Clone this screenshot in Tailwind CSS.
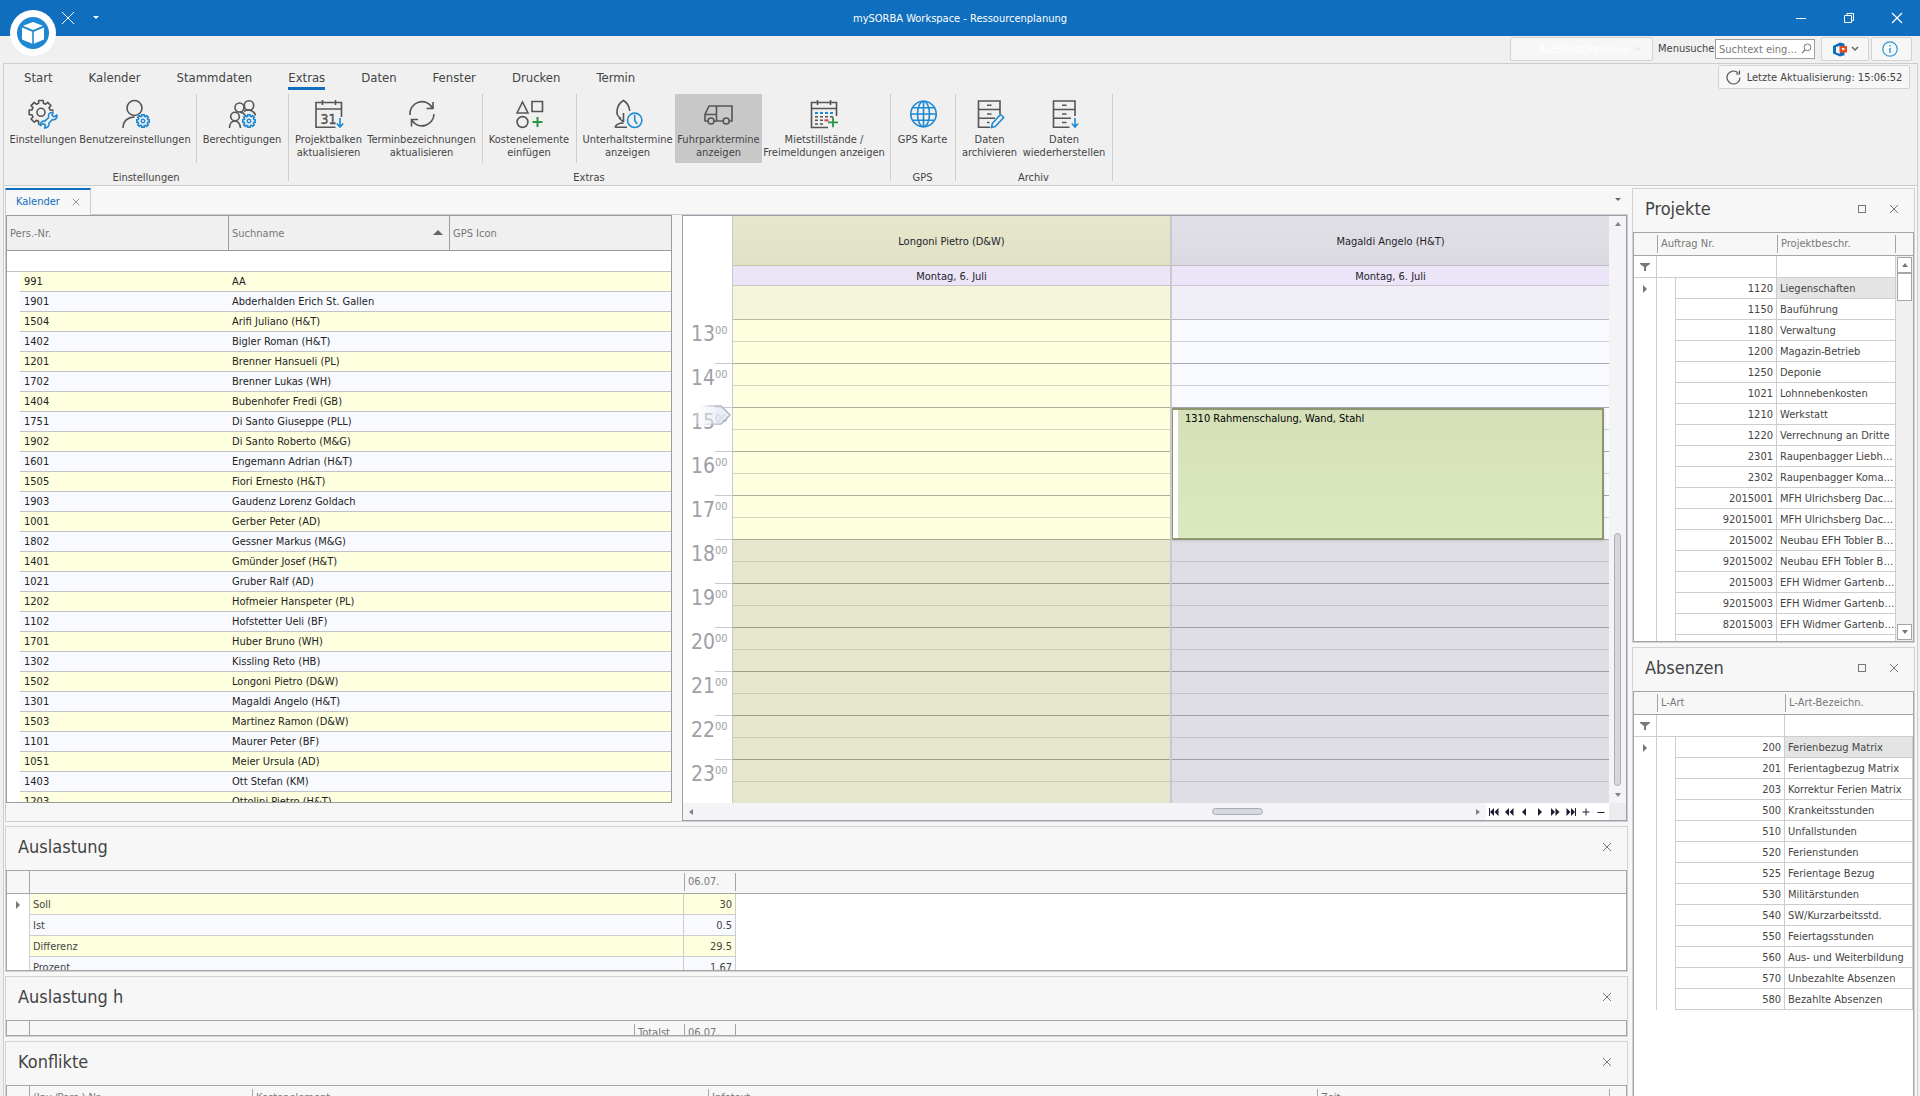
<!DOCTYPE html>
<html lang="de">

<head>
    <meta charset="UTF-8">
    <meta name="viewport" content="width=device-width, initial-scale=1.0">
    <title>mySORBA Workspace - Ressourcenplanung</title>
    <script src="https://cdn.jsdelivr.net/npm/@tailwindcss/browser@4"></script>
</head>

<body class="bg-[#f0f0f0] text-[#444444] text-[11px] leading-[13px] font-['DejaVu_Sans_Condensed','DejaVu_Sans',sans-serif]">
    <svg class="hidden">
        <symbol id="gear" viewBox="-13 -13 26 26">
            <path d="M11.8-2.3V2.3L9 2.4 8.05 4.65 9.95 6.7 6.7 9.95 4.65 8.05 2.4 9 2.3 11.8H-2.3L-2.4 9-4.65 8.05-6.7 9.95-9.95 6.7-8.05 4.65-9 2.4-11.8 2.3V-2.3L-9-2.4-8.05-4.65-9.95-6.7-6.7-9.95-4.65-8.05-2.4-9-2.3-11.8H2.3L2.4-9 4.65-8.05 6.7-9.95 9.95-6.7 8.05-4.65 9-2.4Z" fill="none" stroke="#1e88d2" stroke-width="3" stroke-linejoin="round" />
            <circle r="3.2" fill="none" stroke="#1e88d2" stroke-width="2.6" />
        </symbol>
        <symbol id="close" viewBox="0 0 10 10">
            <path d="M1 1l8 8M9 1l-8 8" fill="none" stroke="currentColor" />
        </symbol>
        <symbol id="filter" viewBox="0 0 10 10">
            <path d="M0 1h10v1L6 5v4H4V5L0 2z" fill="currentColor" />
        </symbol>
    </svg>

    <div class="flex flex-col h-screen overflow-hidden">
        <!-- Titelleiste -->
        <header class="relative h-9 shrink-0 bg-[#106ebe] text-white flex items-center">
            <div class="grow basis-40 flex items-center pl-[62px] gap-[18px]">
                <button aria-label="Werkzeuge"><svg class="w-3 h-3" viewBox="0 0 12 12"><path d="M0 0l12 12M12 0L0 12" stroke="white" /></svg></button>
                <button aria-label="Schnellzugriff"><svg class="w-2 h-1" viewBox="0 0 8 4"><path d="M1 0h6L4 3z" fill="white" /></svg></button>
            </div>
            <h1>mySORBA Workspace - Ressourcenplanung</h1>
            <div class="grow basis-40 flex items-center justify-end pr-[17px] gap-9">
                <button aria-label="Minimieren"><svg class="w-3 h-3" viewBox="0 0 12 12"><path d="M1 6.5h10" stroke="white" /></svg></button>
                <button aria-label="Verkleinern"><svg class="w-3 h-3" viewBox="0 0 12 12"><path d="M1.500 3.500h7v7h-7zM4 3.500v-2h6.500v7h-2" fill="none" stroke="white" /></svg></button>
                <button aria-label="Schliessen"><svg class="w-3 h-3" viewBox="0 0 12 12"><path d="M1 1l10 10M11 1L1 11" stroke="white" stroke-width="1.200" /></svg></button>
            </div>
            <button class="absolute left-[10px] top-[10px] z-10" aria-label="Hauptmenü">
                <svg class="w-[46px] h-[46px]" viewBox="0 0 46 46">
                    <circle cx="23" cy="23" r="23" fill="white" />
                    <circle cx="23" cy="23" r="16" fill="#1e88d2" />
                    <path d="M23 12l10 3.700-10 4.300-10-4.300zM12 17.500l10.200 4.300v12L12 29.500zM34 17.500l-10.200 4.300v12L34 29.500z" fill="white" />
                </svg>
            </button>
        </header>

        <!-- Menusuche -->
        <div class="h-[27px] shrink-0 flex justify-end items-start pt-px pr-2">
            <button class="h-6 w-[143px] mr-[5px] flex items-center justify-end gap-1 pr-2.5 border border-[#d2d2d2] rounded-xs bg-[#f7f7f7] text-white">AaEsTestDomaene
                <svg class="w-2 h-2" viewBox="0 0 8 8"><path d="M1 2l3 3 3-3" fill="none" stroke="#eaeaea" stroke-width="1.500" /></svg></button>
            <label for="suche" class="w-[57px] h-6 leading-[23px]">Menusuche</label>
            <div class="relative mt-0.5 mr-1.5">
                <input id="suche" type="text" placeholder="Suchtext eing…" class="block w-[100px] h-5 pl-[3px] pr-4 border border-[#a0a0a0] bg-white placeholder:text-[#777777]">
                <svg class="absolute right-[3px] top-1 w-[11px] h-[11px]" viewBox="0 0 11 11"><circle cx="6.500" cy="4.300" r="3.400" fill="none" stroke="#777" /><path d="M4 7L1 10" stroke="#777" stroke-width="1.300" /></svg>
            </div>
            <button class="h-6 w-12 mr-0.5 flex items-center justify-center gap-1 border border-[#d2d2d2] rounded-xs bg-[#f7f7f7]" aria-label="Office">
                <svg class="w-[15px] h-[15px]" viewBox="0 0 15 15"><path d="M1 4L8 .5l4.500 1.200v11.600L8 14.500 1 11.500z" fill="#106ebe" /><path d="M4 5l4-1.200v8L4 10.500z" fill="#f7f7f7" /><path d="M7.500 4H15v6.500H7.500z" fill="#e64a19" /><path d="M9.500 6h3v2h-1.500v1z" fill="white" /></svg>
                <svg class="w-2 h-2" viewBox="0 0 8 8"><path d="M1 2l3 3 3-3" fill="none" stroke="#666" stroke-width="1.500" /></svg>
            </button>
            <button class="h-6 w-[41px] pr-1 flex items-center justify-center border border-[#d2d2d2] rounded-xs bg-[#f7f7f7]" aria-label="Info">
                <svg class="w-4 h-4" viewBox="0 0 16 16"><circle cx="8" cy="8" r="7.200" fill="none" stroke="#2e95d3" stroke-width="1.200" /><path d="M8 7v5M8 4v1.500" stroke="#2e95d3" stroke-width="1.400" /></svg>
            </button>
        </div>

        <div class="flex-1 min-h-0 ml-[3px] mr-0.5 flex flex-col border border-b-0 border-[#cdcdcd] bg-[#f7f7f7]">
            <!-- Ribbon -->
            <div class="relative shrink-0 bg-[#f0f0f0] border-b border-[#cdcdcd] pb-1">
                <nav class="h-[26px] pl-5 flex gap-9 text-[13px] leading-7">
                    <button class="h-[26px] whitespace-nowrap border-b-3 border-transparent">Start</button>
                    <button class="h-[26px] whitespace-nowrap border-b-3 border-transparent">Kalender</button>
                    <button class="h-[26px] whitespace-nowrap border-b-3 border-transparent">Stammdaten</button>
                    <button class="h-[26px] whitespace-nowrap border-b-3 border-[#106ebe]">Extras</button>
                    <button class="h-[26px] whitespace-nowrap border-b-3 border-transparent">Daten</button>
                    <button class="h-[26px] whitespace-nowrap border-b-3 border-transparent">Fenster</button>
                    <button class="h-[26px] whitespace-nowrap border-b-3 border-transparent">Drucken</button>
                    <button class="h-[26px] whitespace-nowrap border-b-3 border-transparent">Termin</button>
                </nav>
                <button class="absolute right-[7px] top-px h-6 w-48 flex items-center justify-center gap-1.5 border border-[#d2d2d2] rounded-xs bg-[#f7f7f7] whitespace-nowrap">
                    <svg class="w-[15px] h-[15px]" viewBox="0 0 15 15"><path d="M14 7.500A6.500 6.500 0 1 1 12 2.800M13.500 .5v3.500H10" fill="none" stroke="#555" stroke-width="1.200" /></svg>
                    Letzte Aktualisierung: 15:06:52
                </button>

                <div class="mt-1 flex h-[87px] text-center">
                    <div class="flex flex-col pl-1 pr-1 border-r border-[#cdcdcd]">
                        <div class="flex shrink-0">
                            <button class="w-[70px] h-[69px] pt-1 flex flex-col items-center whitespace-nowrap">
                                <svg class="w-8 h-8 mb-[3px] shrink-0" viewBox="0 0 32 32" fill="none" stroke="#555" stroke-width="1.600" stroke-linejoin="round">
                                    <path transform="translate(14 14.300)" d="M-1.500 11.800H-2.300L-2.400 9-4.650 8.050-6.700 9.950-9.950 6.700-8.050 4.650-9 2.400-11.800 2.300V-2.300L-9-2.400-8.050-4.650-9.950-6.700-6.700-9.950-4.650-8.050-2.400-9-2.300-11.800H2.300L2.400-9 4.650-8.050 6.700-9.950 9.950-6.700 8.050-4.650 9-2.400 11.800-2.300V-1" />
                                    <circle cx="14" cy="14.300" r="4" />
                                    <path stroke="#1e88d2" d="M26 14.200C22.500 14 20.600 17 21.600 19.600L17.800 23.200C15.400 22.600 13 24.400 13.200 27.600L16 25.600 18.600 27 17.600 30C20.800 30.200 22.600 27.600 21.800 25.200L25.400 21.600C28.400 22.200 30.600 20 30 17L27.400 18.800 25 17.400Z" />
                                </svg>
                                Einstellungen
                            </button>
                            <button class="w-[114px] h-[69px] pt-1 flex flex-col items-center whitespace-nowrap">
                                <svg class="w-8 h-8 mb-[3px] shrink-0" viewBox="0 0 32 32" fill="none" stroke="#555" stroke-width="1.600">
                                    <circle cx="15.500" cy="10" r="7.500" /><path d="M4 30c0-7 5-11 11.500-11" />
                                    <use href="#gear" x="17" y="16" width="14" height="14" />
                                </svg>
                                Benutzereinstellungen
                            </button>
                            <div class="w-px h-[69px] ml-1 mr-[3px] bg-[#cdcdcd]"></div>
                            <button class="w-[84px] h-[69px] pt-1 flex flex-col items-center whitespace-nowrap">
                                <svg class="w-8 h-8 mb-[3px] shrink-0" viewBox="0 0 32 32" fill="none" stroke="#555" stroke-width="1.600">
                                    <circle cx="13.500" cy="9.500" r="4.500" /><circle cx="23" cy="7.500" r="4.700" /><circle cx="9" cy="18.500" r="4.300" />
                                    <path d="M3.500 30c0-4 2-7 5.500-7s5 3 5.500 7M14 14.200c2.500 0 4 1.200 5 3M18 13.500c2-1.500 5-1.800 7.500-.8 2 .9 3.500 2.500 4 4.800" />
                                    <use href="#gear" x="16" y="16" width="14" height="14" />
                                </svg>
                                Berechtigungen
                            </button>
                        </div>
                        <div class="pt-2">Einstellungen</div>
                    </div>

                    <div class="flex flex-col pl-[3px] pr-1 border-r border-[#cdcdcd]">
                        <div class="flex shrink-0">
                            <button class="w-[73px] h-[69px] pt-1 flex flex-col items-center whitespace-nowrap">
                                <svg class="w-8 h-8 mb-[3px] shrink-0" viewBox="0 0 32 32" fill="none" stroke="#555" stroke-width="1.600">
                                    <path d="M22.500 29.300H3V4.500h25.500V19M3 11h25.500M9.500 2v5M22.500 2v5" />
                                    <text x="7.500" y="26" font-size="14" fill="#555" stroke="#555" stroke-width=".4">31</text>
                                    <path stroke="#1e88d2" d="M27 20v9M23.800 25.500L27 29l3.200-3.500" />
                                </svg>
                                Projektbalken<br>aktualisieren
                            </button>
                            <button class="w-[113px] h-[69px] pt-1 flex flex-col items-center whitespace-nowrap">
                                <svg class="w-8 h-8 mb-[3px] shrink-0" viewBox="0 0 32 32" fill="none" stroke="#555" stroke-width="1.600">
                                    <path d="M4 17A12 12 0 0 1 26.500 10M27 4v6.500h-6.500M28 16A12 12 0 0 1 6 22.500M5.500 28.500v-7H12" />
                                </svg>
                                Terminbezeichnungen<br>aktualisieren
                            </button>
                            <div class="w-px h-[69px] ml-1 mr-[3px] bg-[#cdcdcd]"></div>
                            <button class="w-[86px] h-[69px] pt-1 flex flex-col items-center whitespace-nowrap">
                                <svg class="w-8 h-8 mb-[3px] shrink-0" viewBox="0 0 32 32" fill="none" stroke="#555" stroke-width="1.600">
                                    <path d="M9.500 4L15 15H4zM19 3.500h10.500v10H19z" /><circle cx="9.500" cy="24" r="5.400" />
                                    <path stroke="#2a9445" stroke-width="2" d="M24.500 19v10M19.500 24h10" />
                                </svg>
                                Kostenelemente<br>einfügen
                            </button>
                            <div class="w-px h-[69px] ml-1 mr-[3px] bg-[#cdcdcd]"></div>
                            <button class="w-[95px] h-[69px] pt-1 flex flex-col items-center whitespace-nowrap">
                                <svg class="w-8 h-8 mb-[3px] shrink-0" viewBox="0 0 32 32" fill="none" stroke="#555" stroke-width="1.600">
                                    <path d="M9 20.500C2 17 5 6 11.500 2.500c4 2.500 6 6.500 6.200 10.500M11.500 15v9M7 20l4.500 4M3 29.500c1-3 3-4.500 8.500-4.500M3 29.200h12" />
                                    <circle cx="22.700" cy="22.300" r="7.200" stroke="#1e88d2" /><path stroke="#1e88d2" d="M22.700 17v5.500l2.500 3.500" />
                                </svg>
                                Unterhaltstermine<br>anzeigen
                            </button>
                            <button class="w-[87px] h-[69px] pt-1 flex flex-col items-center whitespace-nowrap bg-[#c8c8c8]">
                                <svg class="w-8 h-8 mb-[3px] shrink-0" viewBox="0 0 32 32" fill="none" stroke="#555" stroke-width="1.600">
                                    <path d="M4.800 23H2v-6.500L6 8h23v15h-2.500M11 23h9M13.500 8v15M2 16.500h11.500" /><circle cx="8" cy="23" r="3" /><circle cx="23.200" cy="23" r="3" />
                                </svg>
                                Fuhrparktermine<br>anzeigen
                            </button>
                            <button class="w-[124px] h-[69px] pt-1 flex flex-col items-center whitespace-nowrap">
                                <svg class="w-8 h-8 mb-[3px] shrink-0" viewBox="0 0 32 32" fill="none" stroke="#555" stroke-width="1.600">
                                    <path d="M20 29.500H3.500V4.500h25V18M3.500 10.500h25M9.500 2v5M22.500 2v5" />
                                    <path stroke="#1e88d2" stroke-width="2" stroke-dasharray="3 2" d="M7 15h19" />
                                    <path stroke-width="1.500" stroke-dasharray="3 2" d="M7 18.700h19M7 22.300h10M7 26h10" />
                                    <path stroke="#e53935" stroke-width="2" d="M16.500 22.300h4" />
                                    <path stroke="#2a9445" stroke-width="1.800" d="M25 19.300v10M20 24.300h10" />
                                </svg>
                                Mietstillstände /<br>Freimeldungen anzeigen
                            </button>
                        </div>
                        <div class="pt-2">Extras</div>
                    </div>

                    <div class="flex flex-col pl-[3px] pr-1 border-r border-[#cdcdcd]">
                        <div class="flex shrink-0">
                            <button class="w-[57px] h-[69px] pt-1 flex flex-col items-center whitespace-nowrap">
                                <svg class="w-8 h-8 mb-[3px] shrink-0" viewBox="0 0 32 32" fill="none" stroke="#1e88d2" stroke-width="1.600">
                                    <circle cx="16.500" cy="16" r="12.700" /><ellipse cx="16.500" cy="16" rx="6" ry="12.700" />
                                    <path d="M16.500 3.500v25M4 16h25M6 9.700h21M6 22.300h21" />
                                </svg>
                                GPS Karte
                            </button>
                        </div>
                        <div class="pt-2">GPS</div>
                    </div>

                    <div class="flex flex-col pl-[3px] pr-1 border-r border-[#cdcdcd]">
                        <div class="flex shrink-0">
                            <button class="w-[61px] h-[69px] pt-1 flex flex-col items-center whitespace-nowrap">
                                <svg class="w-8 h-8 mb-[3px] shrink-0" viewBox="0 0 32 32" fill="none" stroke="#555" stroke-width="1.600">
                                    <path d="M16 29.300H4.500V3H26v13M4.500 11.500H26M4.500 20.300H21M13 7.300h4.500M13 16h4.500M13 24.500h2.500" />
                                    <path stroke="#1e88d2" d="M26.500 16.500l3.200 3-8.500 9-3.700 1 .8-4z" />
                                </svg>
                                Daten<br>archivieren
                            </button>
                            <button class="w-[88px] h-[69px] pt-1 flex flex-col items-center whitespace-nowrap">
                                <svg class="w-8 h-8 mb-[3px] shrink-0" viewBox="0 0 32 32" fill="none" stroke="#555" stroke-width="1.600">
                                    <path d="M21.500 29.300H5.500V3H27v15M5.500 11.500H27M5.500 20.300H23M14 7.300h4.500M14 16h4.500M14 24.500h4.500" />
                                    <path stroke="#1e88d2" d="M27 20v9M23.800 25.500L27 29l3.200-3.500" />
                                </svg>
                                Daten<br>wiederherstellen
                            </button>
                        </div>
                        <div class="pt-2">Archiv</div>
                    </div>
                </div>
            </div>

            <div class="flex-1 min-h-0 flex gap-1 pl-px pr-0.5">
                <div class="flex-1 min-w-0 flex flex-col">
                    <!-- Kalender -->
                    <div class="h-7 shrink-0 flex items-end justify-between pr-1.5">
                        <button class="relative z-10 h-[27px] -mb-px w-[86px] pl-2.5 pr-2.5 pb-0.5 flex items-center justify-between border-x border-[#cdcdcd] border-t-2 border-t-[#106ebe] bg-[#f7f7f7] text-[#106ebe]">Kalender
                            <svg class="w-2 h-2 text-[#777777]"><use href="#close" /></svg></button>
                        <button class="h-7" aria-label="Fensterliste"><svg class="w-2 h-1" viewBox="0 0 8 4"><path d="M1 0h6L4 3z" fill="#666" /></svg></button>
                    </div>
                    <section class="flex-1 min-h-0 flex gap-2.5 border border-[#cdcdcd]">
                        <div class="w-[666px] mb-[18px] shrink-0 overflow-hidden border border-[#9c9c9c] bg-white">
                            <table class="w-full table-fixed border-separate border-spacing-0 text-left text-[#222222]">
                                <colgroup>
                                    <col class="w-[13px]">
                                    <col class="w-[209px]">
                                    <col class="w-[221px]">
                                    <col>
                                </colgroup>
                                <thead class="bg-[#f0f0f0] text-[#777777]">
                                    <tr>
                                        <th colspan="2" class="h-[35px] p-0 pl-[3px] border-b border-r border-[#9c9c9c] font-normal">Pers.-Nr.</th>
                                        <th class="p-0 px-[3px] border-b border-r border-[#9c9c9c] font-normal">
                                            <div class="flex items-center justify-between pr-[3px]">Suchname<svg class="w-2.5 h-2.5" viewBox="0 0 10 10"><path d="M5 2l5 5H0z" fill="#666" /></svg></div>
                                        </th>
                                        <th class="p-0 pl-[3px] border-b border-[#9c9c9c] font-normal">GPS Icon</th>
                                    </tr>
                                    <tr class="bg-white"><td colspan="4" class="h-[21px] p-0 border-b border-[#c3c3c3]"></td></tr>
                                </thead>
                                <tbody id="personen"></tbody>
                            </table>
                        </div>

                        <div class="flex-1 min-w-0 flex flex-col border border-[#9d9dab] bg-[#f4f4f6] text-[#1e1e2d]">
                            <div class="flex-1 min-h-0 flex">
                                <div class="w-[50px] shrink-0 overflow-hidden border-r border-[#c8c8d0] bg-white text-[#a0a0a8]">
                                    <div class="h-[104px]"></div>
                                    <div id="stunden" class="relative">
                                        <svg class="absolute left-2 top-[84px] w-10 h-[22px]" viewBox="0 0 40 22">
                                            <defs><linearGradient id="jetzt"><stop offset="0" stop-color="#fff" stop-opacity=".2" /><stop offset=".7" stop-color="#e2e6f5" stop-opacity=".7" /><stop offset="1" stop-color="#eef0fa" stop-opacity=".8" /></linearGradient>
                                            <linearGradient id="rand"><stop offset=".2" stop-color="#c8c8d0" stop-opacity="0" /><stop offset=".7" stop-color="#b0b4c8" /></linearGradient></defs>
                                            <path d="M0 2h30l9 9-9 9H0z" fill="url(#jetzt)" /><path d="M0 1.500L30 2l9 9-9 9-30 .5" fill="none" stroke="url(#rand)" stroke-width="1.500" />
                                        </svg>
                                    </div>
                                </div>
                                <div class="flex-1 min-w-0 overflow-hidden border-r-2 border-[#c8c8d0] text-center">
                                    <div class="h-[50px] leading-[52px] border-b border-[#c1c2aa] bg-linear-to-b from-[#e6e7cb] to-[#e0e1c5]">Longoni Pietro (D&amp;W)</div>
                                    <div class="h-5 leading-[21px] border-b border-[#c8c4d4] bg-[#ece4f7]">Montag, 6. Juli</div>
                                    <div class="h-[34px] border-b border-[#b9b9a0] bg-[#f5f6d9]"></div>
                                    <div id="spalte1"></div>
                                </div>
                                <div class="flex-1 min-w-0 overflow-hidden text-center">
                                    <div class="h-[50px] leading-[52px] border-b border-[#bcbbc4] bg-linear-to-b from-[#e1e0e6] to-[#dbdae0]">Magaldi Angelo (H&amp;T)</div>
                                    <div class="h-5 leading-[21px] border-b border-[#c8c4d4] bg-[#ece4f7]">Montag, 6. Juli</div>
                                    <div class="h-[34px] border-b border-[#b9b9c1] bg-[#f0eff5]"></div>
                                    <div id="spalte2" class="relative">
                                        <div class="absolute left-0 right-[5px] top-[88px] h-[132px] flex border-2 border-l border-[#8c9671] bg-linear-to-b from-[#d5e0b8] to-[#dce9c0] shadow-sm text-left">
                                            <div class="w-[5px] bg-white"></div>
                                            <div class="pl-[7px] pt-0.5 text-black">1310 Rahmenschalung, Wand, Stahl</div>
                                        </div>
                                    </div>
                                </div>
                                <div class="w-[17px] flex flex-col items-center py-1.5">
                                    <svg class="w-2 h-1" viewBox="0 0 8 4"><path d="M1 4h6L4 0z" fill="#808090" /></svg>
                                    <div class="flex-1"></div>
                                    <div class="w-[7px] h-[253px] mb-[7px] rounded-full border border-[#a9adb8] bg-[#d6d8dd]"></div>
                                    <svg class="w-2 h-1" viewBox="0 0 8 4"><path d="M1 0h6L4 4z" fill="#808090" /></svg>
                                </div>
                            </div>
                            <div class="h-[17px] shrink-0 flex items-center text-[#1e1e32]">
                                <svg class="w-1 h-2 ml-1.5" viewBox="0 0 4 8"><path d="M4 1v6L0 4z" fill="#808090" /></svg>
                                <div class="flex-1"></div>
                                <div class="w-[51px] h-[7px] mr-[213px] rounded-full border border-[#a9adb8] bg-[#d6d8dd]"></div>
                                <svg class="w-1 h-2 mr-1.5" viewBox="0 0 4 8"><path d="M0 1v6l4-3z" fill="#808090" /></svg>
                                <div class="h-full w-[123px] flex items-center justify-around bg-white">
                                    <button aria-label="Anfang"><svg class="w-2.5 h-2" viewBox="0 0 10 8"><path d="M0 0h1v8H0zM5 0v8L1 4zM9.500 0v8l-4-4z" fill="currentColor" /></svg></button>
                                    <button aria-label="Seite zurück"><svg class="w-2.5 h-2" viewBox="0 0 10 8"><path d="M5 0v8L1 4zM9.500 0v8l-4-4z" fill="currentColor" /></svg></button>
                                    <button aria-label="Zurück"><svg class="w-2.5 h-2" viewBox="0 0 10 8"><path d="M7 0v8L3 4z" fill="currentColor" /></svg></button>
                                    <button aria-label="Vor"><svg class="w-2.5 h-2" viewBox="0 0 10 8"><path d="M3 0v8l4-4z" fill="currentColor" /></svg></button>
                                    <button aria-label="Seite vor"><svg class="w-2.5 h-2" viewBox="0 0 10 8"><path d="M1 0v8l4-4zM5.500 0v8l4-4z" fill="currentColor" /></svg></button>
                                    <button aria-label="Ende"><svg class="w-2.5 h-2" viewBox="0 0 10 8"><path d="M.5 0v8l4-4zM5 0v8l4-4zM9 0h1v8H9z" fill="currentColor" /></svg></button>
                                    <button aria-label="Mehr"><svg class="w-2.5 h-2" viewBox="0 0 10 8"><path d="M1.500 4h7M5 .5v7" stroke="currentColor" /></svg></button>
                                    <button aria-label="Weniger"><svg class="w-2.5 h-2" viewBox="0 0 10 8"><path d="M1.500 4.500h7" stroke="currentColor" /></svg></button>
                                </div>
                                <div class="w-[17px] h-full bg-[#ececef]"></div>
                            </div>
                        </div>
                    </section>

                    <!-- Auslastung -->
                    <section class="h-[146px] mt-1 shrink-0 flex flex-col border border-[#d2d2d2]">
                        <div class="h-[43px] shrink-0 pl-3 pr-[15px] pb-1 flex items-center justify-between">
                            <h2 class="text-[18px] leading-6">Auslastung</h2>
                            <button aria-label="Schliessen"><svg class="w-2.5 h-2.5 text-[#777777]"><use href="#close" /></svg></button>
                        </div>
                        <div class="flex-1 min-h-0 overflow-hidden border border-[#a5a5a5] bg-white">
                            <div class="h-[23px] border-b border-[#a5a5a5] bg-[#f7f7f7]"></div>
                            <table class="-mt-[23px] relative table-fixed border-separate border-spacing-0 w-[729px]">
                                <thead class="text-[#777777]">
                                    <tr>
                                        <th class="w-[23px] h-[23px] p-0 border-b border-r border-[#a5a5a5]"></th>
                                        <th class="w-[654px] p-0 border-b border-[#a5a5a5]"></th>
                                        <th class="w-[52px] p-0 border-b border-[#a5a5a5] font-normal text-left"><div class="h-[18px] pl-[3px] leading-[18px] border-x border-[#a5a5a5]">06.07.</div></th>
                                    </tr>
                                </thead>
                                <tbody id="auslastung"></tbody>
                            </table>
                        </div>
                    </section>

                    <!-- Auslastung h -->
                    <section class="h-[61px] mt-1 shrink-0 flex flex-col border border-[#d2d2d2]">
                        <div class="h-[43px] shrink-0 pl-3 pr-[15px] pb-1 flex items-center justify-between">
                            <h2 class="text-[18px] leading-6">Auslastung h</h2>
                            <button aria-label="Schliessen"><svg class="w-2.5 h-2.5 text-[#777777]"><use href="#close" /></svg></button>
                        </div>
                        <div class="flex-1 min-h-0 overflow-hidden flex border border-[#a5a5a5] text-[#777777]">
                            <div class="w-[23px] border-r border-[#a5a5a5]"></div>
                            <div class="w-[604px]"></div>
                            <div class="w-[50px] h-[18px] mt-[3px] pl-[3px] leading-[18px] border-l border-[#a5a5a5]">Totalst</div>
                            <div class="w-[52px] h-[18px] mt-[3px] pl-[3px] leading-[18px] border-x border-[#a5a5a5]">06.07.</div>
                        </div>
                    </section>

                    <!-- Konflikte -->
                    <section class="h-[55px] mt-1 shrink-0 flex flex-col border border-b-0 border-[#d2d2d2]">
                        <div class="h-[43px] shrink-0 pl-3 pr-[15px] pb-1 flex items-center justify-between">
                            <h2 class="text-[18px] leading-6">Konflikte</h2>
                            <button aria-label="Schliessen"><svg class="w-2.5 h-2.5 text-[#777777]"><use href="#close" /></svg></button>
                        </div>
                        <div class="flex-1 min-h-0 overflow-hidden flex border border-b-0 border-[#a5a5a5] text-[#777777]">
                            <div class="w-[23px] border-r border-[#a5a5a5]"></div>
                            <div class="w-[222px] h-[18px] mt-[3px] pl-[3px] leading-[18px]">(Inv./Pers.) Nr.</div>
                            <div class="w-[456px] h-[18px] mt-[3px] pl-[3px] leading-[18px] border-l border-[#a5a5a5]">Kostenelement</div>
                            <div class="flex-1 h-[18px] mt-[3px] pl-[3px] leading-[18px] border-l border-[#a5a5a5]">Infotext</div>
                            <div class="w-[293px] h-[18px] mt-[3px] pl-[3px] pr-1.5 flex justify-between leading-[18px] border-x border-[#a5a5a5]">Zeit<svg class="w-2.5 h-2.5 mt-1.5" viewBox="0 0 10 10"><path d="M0 1h10L5 6z" fill="#666" /></svg></div>
                            <div class="w-4"></div>
                        </div>
                    </section>
                </div>

                <aside class="w-[283px] shrink-0 flex flex-col pt-0.5">
                    <!-- Projekte -->
                    <section class="h-[455px] shrink-0 flex flex-col border border-[#d2d2d2]">
                        <div class="h-[43px] shrink-0 pl-3 pr-[15px] pb-1 flex items-center">
                            <h2 class="flex-1 text-[18px] leading-6">Projekte</h2>
                            <button class="mr-[23px]" aria-label="Maximieren"><span class="block w-2 h-2 border border-[#777777]"></span></button>
                            <button aria-label="Schliessen"><svg class="w-2.5 h-2.5 text-[#777777]"><use href="#close" /></svg></button>
                        </div>
                        <div class="flex-1 min-h-0 flex overflow-hidden border border-[#a5a5a5] bg-white">
                            <table class="w-[262px] h-px shrink-0 table-fixed border-separate border-spacing-0">
                                <colgroup>
                                    <col class="w-[23px]">
                                    <col class="w-[19px]">
                                    <col class="w-[101px]">
                                    <col>
                                </colgroup>
                                <thead class="bg-[#f7f7f7] text-[#777777] text-left">
                                    <tr>
                                        <th class="h-[23px] p-0 border-b border-[#a5a5a5]"></th>
                                        <th colspan="2" class="p-0 border-b border-[#a5a5a5] font-normal"><div class="h-[18px] pl-[3px] leading-[18px] border-l border-[#a5a5a5]">Auftrag Nr.</div></th>
                                        <th class="p-0 border-b border-[#a5a5a5] font-normal"><div class="h-[18px] pl-[3px] leading-[18px] border-x border-[#a5a5a5]">Projektbeschr.</div></th>
                                    </tr>
                                    <tr class="bg-white text-[#777777]">
                                        <td class="h-[22px] p-0 border-b border-r border-[#cdcdcd]"><svg class="w-2.5 h-2.5 ml-1.5"><use href="#filter" /></svg></td>
                                        <td colspan="2" class="p-0 border-b border-r border-[#cdcdcd]"></td>
                                        <td class="p-0 border-b border-r border-[#cdcdcd]"></td>
                                    </tr>
                                </thead>
                                <tbody id="projekte"></tbody>
                            </table>
                            <div class="flex-1 flex flex-col">
                                <div class="h-[23px] shrink-0 bg-[#f7f7f7] border-b border-[#a5a5a5]"></div>
                                <div class="flex-1 flex flex-col p-px bg-[#f0f0f0]">
                                    <button class="h-4 flex items-center justify-center border border-[#a5a5a5] bg-white" aria-label="Nach oben"><svg class="w-2 h-1" viewBox="0 0 8 4"><path d="M1 4h6L4 0z" fill="#777" /></svg></button>
                                    <div class="h-7 border border-[#a5a5a5] bg-white"></div>
                                    <div class="flex-1"></div>
                                    <button class="h-4 flex items-center justify-center border border-[#a5a5a5] bg-white" aria-label="Nach unten"><svg class="w-2 h-1" viewBox="0 0 8 4"><path d="M1 0h6L4 4z" fill="#777" /></svg></button>
                                </div>
                            </div>
                        </div>
                    </section>

                    <!-- Absenzen -->
                    <section class="flex-1 min-h-0 mt-1 flex flex-col border border-b-0 border-[#d2d2d2]">
                        <div class="h-[43px] shrink-0 pl-3 pr-[15px] pb-1 flex items-center">
                            <h2 class="flex-1 text-[18px] leading-6">Absenzen</h2>
                            <button class="mr-[23px]" aria-label="Maximieren"><span class="block w-2 h-2 border border-[#777777]"></span></button>
                            <button aria-label="Schliessen"><svg class="w-2.5 h-2.5 text-[#777777]"><use href="#close" /></svg></button>
                        </div>
                        <div class="flex-1 min-h-0 overflow-hidden border border-b-0 border-[#a5a5a5] bg-white">
                            <table class="w-full table-fixed border-separate border-spacing-0">
                                <colgroup>
                                    <col class="w-[23px]">
                                    <col class="w-[19px]">
                                    <col class="w-[109px]">
                                    <col>
                                </colgroup>
                                <thead class="bg-[#f7f7f7] text-[#777777] text-left">
                                    <tr>
                                        <th class="h-[23px] p-0 border-b border-[#a5a5a5]"></th>
                                        <th colspan="2" class="p-0 border-b border-[#a5a5a5] font-normal"><div class="h-[18px] pl-[3px] leading-[18px] border-l border-[#a5a5a5]">L-Art</div></th>
                                        <th class="p-0 border-b border-[#a5a5a5] font-normal"><div class="h-[18px] pl-[3px] leading-[18px] border-l border-[#a5a5a5]">L-Art-Bezeichn.</div></th>
                                    </tr>
                                    <tr class="bg-white text-[#777777]">
                                        <td class="h-[22px] p-0 border-b border-r border-[#cdcdcd]"><svg class="w-2.5 h-2.5 ml-1.5"><use href="#filter" /></svg></td>
                                        <td colspan="2" class="p-0 border-b border-r border-[#cdcdcd]"></td>
                                        <td class="p-0 border-b border-[#cdcdcd]"></td>
                                    </tr>
                                </thead>
                                <tbody id="absenzen"></tbody>
                            </table>
                        </div>
                    </section>
                </aside>
            </div>
        </div>
    </div>

    <script>
        const personen = [
            [991, "AA"], [1901, "Abderhalden Erich St. Gallen"], [1504, "Arifi Juliano (H&amp;T)"], [1402, "Bigler Roman (H&amp;T)"],
            [1201, "Brenner Hansueli (PL)"], [1702, "Brenner Lukas (WH)"], [1404, "Bubenhofer Fredi (GB)"], [1751, "Di Santo Giuseppe (PLL)"],
            [1902, "Di Santo Roberto (M&amp;G)"], [1601, "Engemann Adrian (H&amp;T)"], [1505, "Fiori Ernesto (H&amp;T)"], [1903, "Gaudenz Lorenz Goldach"],
            [1001, "Gerber Peter (AD)"], [1802, "Gessner Markus (M&amp;G)"], [1401, "Gmünder Josef (H&amp;T)"], [1021, "Gruber Ralf (AD)"],
            [1202, "Hofmeier Hanspeter (PL)"], [1102, "Hofstetter Ueli (BF)"], [1701, "Huber Bruno (WH)"], [1302, "Kissling Reto (HB)"],
            [1502, "Longoni Pietro (D&amp;W)"], [1301, "Magaldi Angelo (H&amp;T)"], [1503, "Martinez Ramon (D&amp;W)"], [1101, "Maurer Peter (BF)"],
            [1051, "Meier Ursula (AD)"], [1403, "Ott Stefan (KM)"], [1203, "Ottolini Pietro (H&amp;T)"]
        ];
        const projekte = [
            [1120, "Liegenschaften"], [1150, "Bauführung"], [1180, "Verwaltung"], [1200, "Magazin-Betrieb"], [1250, "Deponie"],
            [1021, "Lohnnebenkosten"], [1210, "Werkstatt"], [1220, "Verrechnung an Dritte"], [2301, "Raupenbagger Liebh…"], [2302, "Raupenbagger Koma…"],
            [2015001, "MFH Ulrichsberg Dac…"], [92015001, "MFH Ulrichsberg Dac…"], [2015002, "Neubau EFH Tobler B…"], [92015002, "Neubau EFH Tobler B…"],
            [2015003, "EFH Widmer Gartenb…"], [92015003, "EFH Widmer Gartenb…"], [82015003, "EFH Widmer Gartenb…"], ["", ""]
        ];
        const absenzen = [
            [200, "Ferienbezug Matrix"], [201, "Ferientagbezug Matrix"], [203, "Korrektur Ferien Matrix"], [500, "Krankeitsstunden"],
            [510, "Unfallstunden"], [520, "Ferienstunden"], [525, "Ferientage Bezug"], [530, "Militärstunden"], [540, "SW/Kurzarbeitsstd."],
            [550, "Feiertagsstunden"], [560, "Aus- und Weiterbildung"], [570, "Unbezahlte Absenzen"], [580, "Bezahlte Absenzen"]
        ];
        const auslastung = [["Soll", "30"], ["Ist", "0.5"], ["Differenz", "29.5"], ["Prozent", "1.67"]];
        const pfeil = '<svg class="w-1 h-2 ml-[9px]" viewBox="0 0 4 8"><path d="M0 0v8l4-4z" fill="#777" /></svg>';

        document.getElementById("personen").innerHTML = personen.map(([nr, name], i) => `
            <tr class="${i % 2 ? "bg-[#f8faff]" : "bg-[#feffdf]"}">
                <td class="h-5 p-0 bg-white"></td>
                <td class="p-0 pl-1 border-b border-[#c3c3c3]">${nr}</td>
                <td class="p-0 pl-[3px] border-b border-[#c3c3c3]">${name}</td>
                <td class="p-0 border-b border-[#c3c3c3]"></td>
            </tr>`).join("");

        document.getElementById("auslastung").innerHTML = auslastung.map(([titel, wert], i) => `
            <tr class="${i % 2 ? "bg-[#f8faff]" : "bg-[#feffdf]"}">
                <td class="h-[21px] p-0 border-r border-[#cdcdcd] bg-white">${i ? "" : pfeil}</td>
                <td class="p-0 pl-[3px] border-b border-r border-[#cdcdcd]">${titel}</td>
                <td class="p-0 pr-[3px] border-b border-r border-[#cdcdcd] text-right">${wert}</td>
            </tr>`).join("");

        function liste(id, zeilen) {
            document.getElementById(id).innerHTML = zeilen.map(([nr, text], i) => `
                <tr>
                    <td class="h-[21px] p-0 border-r border-[#cdcdcd]">${i ? "" : pfeil}</td>
                    <td class="p-0 border-r border-[#cdcdcd]"></td>
                    <td class="p-0 pr-[3px] border-b border-r border-[#cdcdcd] text-right">${nr}</td>
                    <td class="p-0 pl-[3px] border-b border-r border-[#cdcdcd] whitespace-nowrap overflow-hidden ${i ? "" : "bg-[#e4e4e4]"}">${text}</td>
                </tr>`).join("");
        }
        liste("projekte", projekte);
        liste("absenzen", absenzen);

        // Zeitskala 13 bis 23 Uhr, ab 18 Uhr ausserhalb der Arbeitszeit
        for (let h = 13; h < 24; h++) {
            const frei = h >= 18;
            document.getElementById("stunden").insertAdjacentHTML("beforeend", `
                <div class="h-11 flex">
                    <div class="flex-1 text-right text-[21px] leading-[29px]">${h}</div>
                    <div class="w-[17px] text-[11px] leading-[21px] border-b border-[#c8c8d0]">00</div>
                </div>`);
            document.getElementById("spalte1").insertAdjacentHTML("beforeend", `
                <div class="h-[22px] border-b ${frei ? "bg-[#e5e6cb] border-[#c8c9b0]" : "bg-[#feffdf] border-[#d6d6c0]"}"></div>
                <div class="h-[22px] border-b ${frei ? "bg-[#e5e6cb] border-[#a0a18c]" : "bg-[#feffdf] border-[#acac98]"}"></div>`);
            document.getElementById("spalte2").insertAdjacentHTML("beforeend", `
                <div class="h-[22px] border-b ${frei ? "bg-[#dfdee4] border-[#c3c3cb]" : "bg-[#f8faff] border-[#d0d1d8]"}"></div>
                <div class="h-[22px] border-b ${frei ? "bg-[#dfdee4] border-[#9d9da6]" : "bg-[#f8faff] border-[#a8a9b0]"}"></div>`);
        }
    </script>
</body>

</html>
